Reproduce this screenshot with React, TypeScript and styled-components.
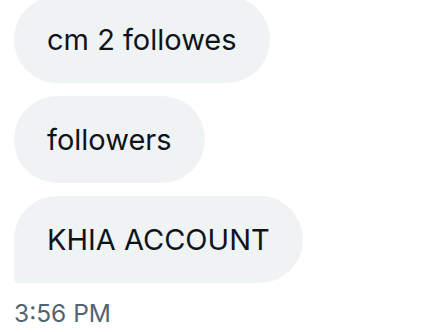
import styled, { createGlobalStyle } from 'styled-components'

const GlobalStyle = createGlobalStyle`
    html, body {
        margin: 0;
        padding: 0;
        background: #ffffff;
    }
`

const Thread = styled.div`
    display: flex;
    flex-direction: column;
    align-items: flex-start;
    gap: 13px;
    padding: 0 14px;
    margin-top: -4px;
    font-family: Inter, "Liberation Sans", Arial, sans-serif;
`

const Bubble = styled.div<{ $last?: boolean }>`
    height: 87px;
    display: flex;
    align-items: center;
    padding: 0 33px;
    background: #eff3f4;
    color: #0f1419;
    font-size: 29px;
    border-radius: 44px;
    border-bottom-left-radius: ${(p) => (p.$last ? '4px' : '44px')};
    white-space: nowrap;
`

const Time = styled.div`
    margin-top: 2px;
    color: #536471;
    font-size: 24.5px;
`

const messages = ['cm 2 followes', 'followers', 'KHIA ACCOUNT']

export default function App() {
    return (
        <>
            <GlobalStyle />
            <Thread>
                {messages.map((m, i) => (
                    <Bubble key={m} $last={i === messages.length - 1}>
                        {m}
                    </Bubble>
                ))}
                <Time>3:56 PM</Time>
            </Thread>
        </>
    )
}
